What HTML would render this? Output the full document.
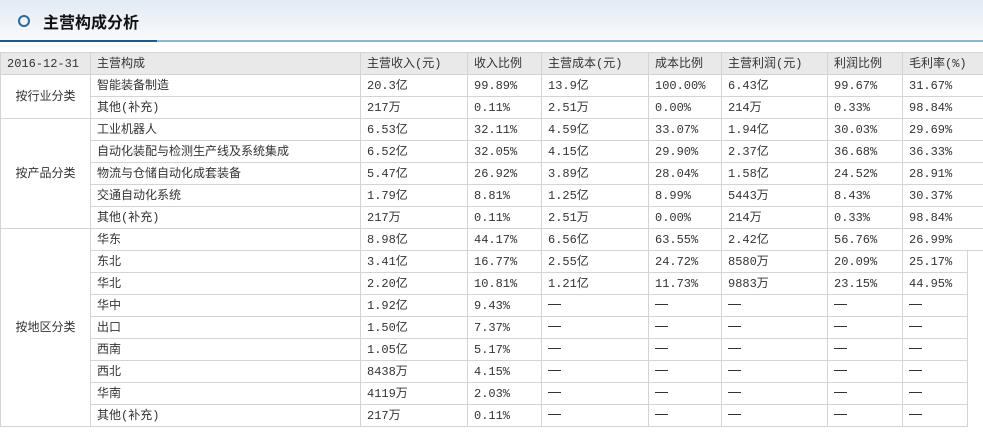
<!DOCTYPE html>
<html><head><meta charset="utf-8"><style>
body{margin:0;width:983px;height:435px;overflow:hidden;background:#fff;font-family:"Liberation Mono","Noto Sans CJK SC",monospace;color:#333;position:relative}
.bar{position:absolute;left:0;top:0;width:983px;height:40px;background:linear-gradient(#e3eaf3,#f8fafd)}
.bar .c{position:absolute;left:18px;top:15px;width:8px;height:8px;border:2px solid #2a6a9c;border-radius:50%}
.bar .t{position:absolute;left:43px;top:9px;font:bold 16px "Liberation Sans","Noto Sans CJK SC",sans-serif;color:#111}
.l1{position:absolute;left:0;top:40px;width:157px;height:2px;background:#1e5a87}
.l2{position:absolute;left:157px;top:40px;width:826px;height:2px;background:#8bb7cf}
table{position:absolute;left:0;top:52px;border-collapse:collapse;table-layout:fixed;width:967px;font-size:12px}
td{border:1px solid #d4d4d4;height:21px;padding:1px 0 0 6px;white-space:nowrap;overflow:hidden;line-height:20px;box-sizing:border-box}
tr.h td{background:#e9e9e9}
td.g{text-align:center;padding:0}
.d{display:inline-block;width:13px;height:1px;background:#333;vertical-align:middle;margin-top:-2px}
.ext{position:absolute;left:967px;width:16px;height:1px;background:#d4d4d4}
.hb{position:absolute;left:967px;top:52px;width:16px;height:22px;background:#e9e9e9;border-top:1px solid #d4d4d4;box-sizing:border-box}
table tr:nth-child(-n+9) td:last-child{border-right:none}
</style></head><body>
<div class="bar"><div class="c"></div><div class="t">主营构成分析</div></div>
<div class="l1"></div><div class="l2"></div>
<table>
<colgroup><col style="width:90px"><col style="width:270px"><col style="width:107px"><col style="width:74px"><col style="width:107px"><col style="width:73px"><col style="width:106px"><col style="width:75px"><col style="width:65px"></colgroup>
<tr class="h"><td>2016-12-31</td><td>主营构成</td><td>主营收入(元)</td><td>收入比例</td><td>主营成本(元)</td><td>成本比例</td><td>主营利润(元)</td><td>利润比例</td><td>毛利率(%)</td></tr>
<tr><td class="g" rowspan="2">按行业分类</td><td>智能装备制造</td><td>20.3亿</td><td>99.89%</td><td>13.9亿</td><td>100.00%</td><td>6.43亿</td><td>99.67%</td><td>31.67%</td></tr>
<tr><td>其他(补充)</td><td>217万</td><td>0.11%</td><td>2.51万</td><td>0.00%</td><td>214万</td><td>0.33%</td><td>98.84%</td></tr>
<tr><td class="g" rowspan="5">按产品分类</td><td>工业机器人</td><td>6.53亿</td><td>32.11%</td><td>4.59亿</td><td>33.07%</td><td>1.94亿</td><td>30.03%</td><td>29.69%</td></tr>
<tr><td>自动化装配与检测生产线及系统集成</td><td>6.52亿</td><td>32.05%</td><td>4.15亿</td><td>29.90%</td><td>2.37亿</td><td>36.68%</td><td>36.33%</td></tr>
<tr><td>物流与仓储自动化成套装备</td><td>5.47亿</td><td>26.92%</td><td>3.89亿</td><td>28.04%</td><td>1.58亿</td><td>24.52%</td><td>28.91%</td></tr>
<tr><td>交通自动化系统</td><td>1.79亿</td><td>8.81%</td><td>1.25亿</td><td>8.99%</td><td>5443万</td><td>8.43%</td><td>30.37%</td></tr>
<tr><td>其他(补充)</td><td>217万</td><td>0.11%</td><td>2.51万</td><td>0.00%</td><td>214万</td><td>0.33%</td><td>98.84%</td></tr>
<tr><td class="g" rowspan="9">按地区分类</td><td>华东</td><td>8.98亿</td><td>44.17%</td><td>6.56亿</td><td>63.55%</td><td>2.42亿</td><td>56.76%</td><td>26.99%</td></tr>
<tr><td>东北</td><td>3.41亿</td><td>16.77%</td><td>2.55亿</td><td>24.72%</td><td>8580万</td><td>20.09%</td><td>25.17%</td></tr>
<tr><td>华北</td><td>2.20亿</td><td>10.81%</td><td>1.21亿</td><td>11.73%</td><td>9883万</td><td>23.15%</td><td>44.95%</td></tr>
<tr><td>华中</td><td>1.92亿</td><td>9.43%</td><td><i class="d"></i></td><td><i class="d"></i></td><td><i class="d"></i></td><td><i class="d"></i></td><td><i class="d"></i></td></tr>
<tr><td>出口</td><td>1.50亿</td><td>7.37%</td><td><i class="d"></i></td><td><i class="d"></i></td><td><i class="d"></i></td><td><i class="d"></i></td><td><i class="d"></i></td></tr>
<tr><td>西南</td><td>1.05亿</td><td>5.17%</td><td><i class="d"></i></td><td><i class="d"></i></td><td><i class="d"></i></td><td><i class="d"></i></td><td><i class="d"></i></td></tr>
<tr><td>西北</td><td>8438万</td><td>4.15%</td><td><i class="d"></i></td><td><i class="d"></i></td><td><i class="d"></i></td><td><i class="d"></i></td><td><i class="d"></i></td></tr>
<tr><td>华南</td><td>4119万</td><td>2.03%</td><td><i class="d"></i></td><td><i class="d"></i></td><td><i class="d"></i></td><td><i class="d"></i></td><td><i class="d"></i></td></tr>
<tr><td>其他(补充)</td><td>217万</td><td>0.11%</td><td><i class="d"></i></td><td><i class="d"></i></td><td><i class="d"></i></td><td><i class="d"></i></td><td><i class="d"></i></td></tr>
</table>
<div class="hb"></div>
<div class="ext" style="top:74px"></div><div class="ext" style="top:96px"></div><div class="ext" style="top:118px"></div><div class="ext" style="top:140px"></div><div class="ext" style="top:162px"></div><div class="ext" style="top:184px"></div><div class="ext" style="top:206px"></div><div class="ext" style="top:228px"></div><div class="ext" style="top:250px"></div>
</body></html>
